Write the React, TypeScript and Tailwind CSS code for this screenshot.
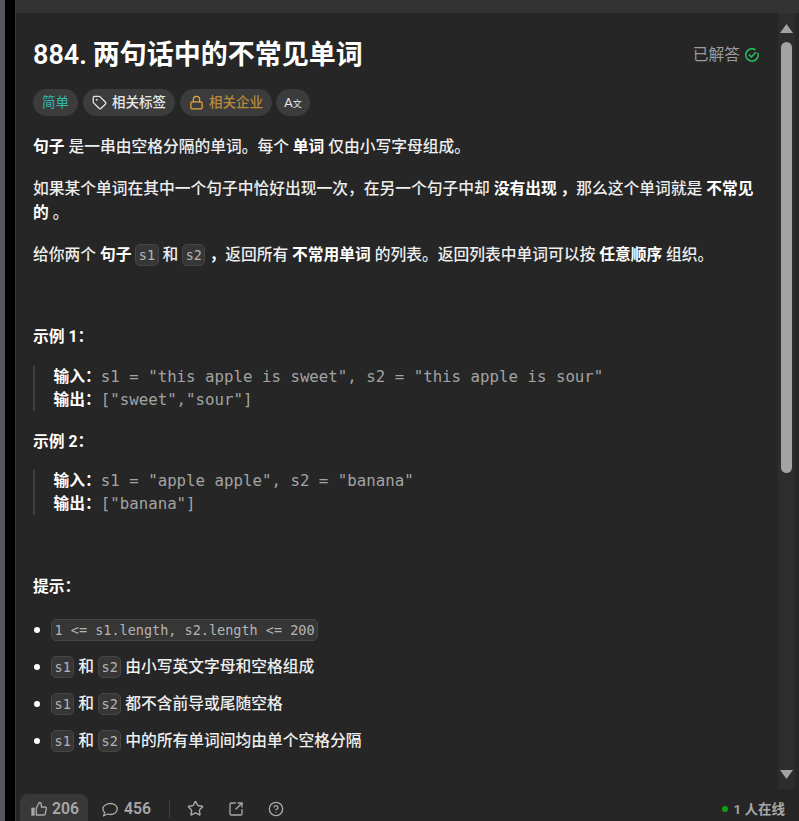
import React from "react";
import { Tag, Lock, Star, SquareArrowOutUpRight, CircleHelp } from "lucide-react";

function C({ children }: { children: React.ReactNode }) {
  return (
    <code className="font-['DejaVu_Sans_Mono',monospace] text-[13.5px] leading-[20px] font-normal text-[#b4b4b4] bg-[#363636] border border-[#464646] rounded-[5px] px-[2.5px] inline-block">
      {children}
    </code>
  );
}
function B({ children }: { children: React.ReactNode }) {
  return <strong className="font-bold text-white">{children}</strong>;
}
function Pill({ children, className = "" }: { children: React.ReactNode; className?: string }) {
  return <div className={"h-[27px] rounded-full bg-[#3c3c3c] flex items-center gap-[5px] text-[13.5px] font-medium " + className}>{children}</div>;
}
function Example({ lines, className = "" }: { lines: [string, string][]; className?: string }) {
  return (
    <div className={"border-l-2 border-[#414141] pl-[18.5px] text-[15.75px] leading-[22.5px] font-['DejaVu_Sans_Mono',monospace] text-[#a3a3a3] " + className}>
      {lines.map(([k, v]) => (
        <div key={k} className="whitespace-pre">
          <B><span className="font-['Roboto','Noto_Sans_CJK_SC',sans-serif]">{k}</span></B>{v}
        </div>
      ))}
    </div>
  );
}
function Li({ children }: { children: React.ReactNode }) {
  return (
    <li className="flex items-center h-[37px] font-medium">
      <span className="w-[6px] h-[6px] rounded-full bg-white ml-[1px] mr-[11px]" />
      <span className="flex items-center gap-[4px]">{children}</span>
    </li>
  );
}

export default function App() {
  return (
    <div className="w-[799px] h-[821px] overflow-hidden flex bg-black font-['Roboto','Noto_Sans_CJK_SC',sans-serif] text-[15.75px] text-[#eeeeee]">
      <div className="w-[5px] bg-[#55555c]" />
      <div className="w-[10px] bg-black" />
      <div className="flex-1 min-w-0 flex flex-col bg-[#262626] border-l border-[#3a3a3a]">
        <div className="h-[13px] bg-[#333333] shrink-0" />
        <div className="flex-1 min-h-0 flex">
          <div className="flex-1 min-w-0 pl-[17px] pr-[19px] pt-[24px]">
            <div className="flex items-center justify-between">
              <h1 className="text-[27px] leading-[36px] font-semibold text-white [word-spacing:-1px]">884. 两句话中的不常见单词</h1>
              <div className="flex items-center gap-[5px] text-[#9b9b9b]">
                已解答
                <svg width="14" height="14" viewBox="0 0 14 14" fill="none" stroke="#22c55e" strokeWidth="1.5" strokeLinecap="round">
                  <path d="M13 5.500A6.200 6.200 0 1 1 9.900 1.500" />
                  <path d="M4.400 7l2 1.900 4.300-4.400" />
                </svg>
              </div>
            </div>
            <div className="flex items-center gap-[5px] mt-[16px]">
              <Pill className="px-[9px] text-[#2fb8ad] font-normal">简单</Pill>
              <Pill className="px-[9px] text-[#e8e8e8]"><Tag size={15} />相关标签</Pill>
              <Pill className="px-[9px] text-[#b58a3c]"><Lock size={15} className="text-[#e6a63a]" />相关企业</Pill>
              <Pill className="px-[8px] -ml-[1px] text-[#e8e8e8]"><span className="leading-none font-normal">A<span className="text-[9px]">文</span></span></Pill>
            </div>
            <p className="mt-[19px] leading-[24px] font-medium"><B>句子</B> 是一串由空格分隔的单词。每个 <B>单词</B> 仅由小写字母组成。</p>
            <p className="mt-[18px] leading-[24px] font-medium">如果某个单词在其中一个句子中恰好出现一次，在另一个句子中却 <B>没有出现</B> <B>，</B>那么这个单词就是 <B>不常见的</B> 。</p>
            <p className="mt-[18px] leading-[24px] font-medium">给你两个 <B>句子</B> <C>s1</C> 和 <C>s2</C> <B>，</B>返回所有 <B>不常用单词</B> 的列表。返回列表中单词可以按 <B>任意顺序</B> 组织。</p>
            <p className="mt-[58px] leading-[24px]"><B>示例 1：</B></p>
            <Example className="mt-[17px] mb-[19px]" lines={[["输入：", 's1 = "this apple is sweet", s2 = "this apple is sour"'], ["输出：", '["sweet","sour"]']]} />
            <p className="leading-[24px]"><B>示例 2：</B></p>
            <Example className="mt-[16px]" lines={[["输入：", 's1 = "apple apple", s2 = "banana"'], ["输出：", '["banana"]']]} />
            <p className="mt-[60px] leading-[24px]"><B>提示：</B></p>
            <ul className="mt-[12px]">
              <Li><C>1 &lt;= s1.length, s2.length &lt;= 200</C></Li>
              <Li><C>s1</C> 和 <C>s2</C> 由小写英文字母和空格组成</Li>
              <Li><C>s1</C> 和 <C>s2</C> 都不含前导或尾随空格</Li>
              <Li><C>s1</C> 和 <C>s2</C> 中的所有单词间均由单个空格分隔</Li>
            </ul>
          </div>
          <div className="w-[17px] mr-[4px] bg-[#2d2d2d] flex flex-col items-center shrink-0">
            <div className="h-[16px] flex items-center justify-center pt-[16px] text-[#a3a3a3]">
              <svg width="13" height="10" viewBox="0 0 13 10" fill="currentColor"><path d="M6.5 0l6.5 9H0z" /></svg>
            </div>
            <div className="w-[11px] mt-[13px] h-[431px] rounded-full bg-[#a3a3a3]" />
            <div className="mt-auto mb-[9px] text-[#a3a3a3]">
              <svg width="13" height="10" viewBox="0 0 13 10" fill="currentColor"><path d="M0 0h13L6.5 9z" /></svg>
            </div>
          </div>
        </div>
        <div className="h-[32px] shrink-0 flex items-start pl-[4px] pr-[14px] pt-[5px] text-[#a8a8a8] font-semibold">
          <div className="flex items-center gap-[5px] h-[40px] pb-[10px] pl-[11px] pr-[9px] bg-[#383838] rounded-[8px]">
            <svg width="16" height="16" viewBox="0 0 24 24" fill="none" stroke="currentColor" strokeWidth="2" strokeLinejoin="round">
              <rect x="0.5" y="10" width="5" height="12" fill="currentColor" stroke="none" />
              <path d="M8 21V10.500L12.500 2a3.200 3.200 0 0 1 3 3.200V9h5.500a2 2 0 0 1 2 2.400l-1.600 7.800A2.200 2.200 0 0 1 19.200 21z" />
            </svg>
            206
          </div>
          <div className="flex items-center gap-[6px] h-[30px] ml-[14px]">
            <svg width="16" height="15" viewBox="0 0 16 15" fill="none" stroke="currentColor" strokeWidth="1.3" strokeLinejoin="round">
              <path d="M8.500 1.500c3.600 0 6.700 2.400 6.700 5.500s-3.100 5.500-6.700 5.500c-1 0-2-.2-2.900-.5L1.500 14l1.200-3.400C1.500 9.500.9 8.300.9 7c0-3.100 4-5.500 7.600-5.500z" />
            </svg>
            456
          </div>
          <div className="w-px h-[18px] bg-[#414141] ml-[18px] mt-[6px]" />
          <Star size={17} className="ml-[17px] mt-[6px]" />
          <SquareArrowOutUpRight size={16} className="ml-[24px] mt-[7px]" />
          <CircleHelp size={16} className="ml-[24px] mt-[7px]" />
          <div className="ml-auto flex items-center gap-[5px] h-[30px] text-[13.5px]">
            <span className="w-[6px] h-[6px] rounded-full bg-[#10a010]" />1 人在线
          </div>
        </div>
      </div>
    </div>
  );
}
